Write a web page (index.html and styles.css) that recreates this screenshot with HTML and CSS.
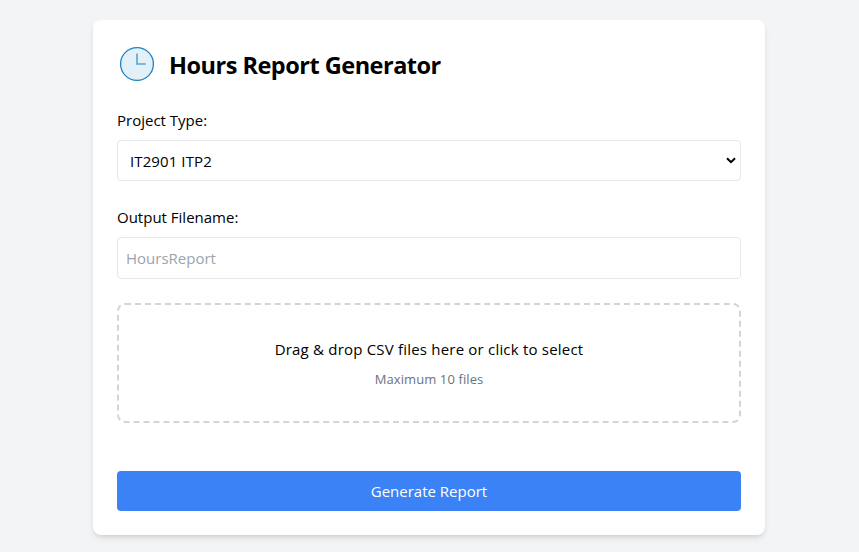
FILE: index.html
```html
<!DOCTYPE html>
<html lang="en">
<head>
<meta charset="utf-8">
<title>Hours Report Generator</title>
<link rel="stylesheet" href="styles.css">
</head>
<body>
<main class="card">
  <header class="header">
    <svg class="logo" viewBox="0 0 40 40" aria-hidden="true">
      <circle cx="20" cy="20" r="16.4" fill="#e3f0f8" stroke="#1c84c6" stroke-width="1.3"/>
      <path d="M20 10v10.4h8.8" transform="translate(0 -.4)" fill="none" stroke="#55a5d5" stroke-width="1.6"/>
    </svg>
    <h1 class="title">Hours Report Generator</h1>
  </header>
  <form class="form">
    <div class="field">
      <label class="label" for="type">Project Type:</label>
      <div class="select-wrap">
        <select class="control select" id="type"><option>IT2901 ITP2</option></select>
        <svg class="chevron" viewBox="0 0 10 7" aria-hidden="true">
          <path d="M1 1.2l4 4 4-4" fill="none" stroke="#000" stroke-width="2"/>
        </svg>
      </div>
    </div>
    <div class="field">
      <label class="label" for="name">Output Filename:</label>
      <input class="control input" id="name" type="text" placeholder="HoursReport">
    </div>
    <div class="dropzone">
      <p class="drop-text">Drag &amp; drop CSV files here or click to select</p>
      <p class="drop-hint">Maximum 10 files</p>
    </div>
    <button class="submit" type="button">Generate Report</button>
  </form>
</main>
</body>
</html>
```

FILE: styles.css
```css
* { box-sizing: border-box; }
body {
  margin: 0;
  min-height: 552px;
  padding-top: 20px;
  background: #f3f4f6;
  color: #000;
  font: 15px/24px "Open Sans", "Noto Sans", sans-serif;
}
.card {
  width: 672px;
  height: 515px;
  margin: 0 auto 0 93px;
  padding: 24px;
  background: #fff;
  border-radius: 8px;
  box-shadow: 0 4px 6px -1px rgba(0,0,0,.1), 0 2px 4px -2px rgba(0,0,0,.1);
}
.header { display: flex; align-items: center; height: 40px; margin-bottom: 24px; gap: 12px; }
.logo { width: 40px; height: 40px; }
.title { margin: 0; padding-top: 2px; font-size: 23.5px; line-height: 32px; font-weight: 700; letter-spacing: -0.5px; }
.form { margin: 0; }
.field { margin-bottom: 24px; }
.label { display: block; margin-bottom: 8px; }
.control {
  display: block;
  width: 100%;
  border: 1px solid #e5e7eb;
  border-radius: 4px;
  background: #fff;
  color: #000;
  font: inherit;
}
.select-wrap { position: relative; }
.select { height: 41px; padding: 7px 12px; appearance: none; letter-spacing: 0.1px; }
.chevron { position: absolute; right: 5px; top: 17px; width: 10px; height: 7px; pointer-events: none; }
.input { height: 42px; padding: 8px; }
.input::placeholder { color: #9ca3af; opacity: 1; }
.dropzone {
  height: 120px;
  padding: 32px 0 0;
  border: 2px dashed #d1d5db;
  border-radius: 8px;
  text-align: center;
}
.drop-text { margin: 0 0 8px; letter-spacing: 0.2px; }
.drop-hint { margin: 0; color: #6b7280; font-size: 13px; line-height: 20px; letter-spacing: 0.1px; }
.submit {
  display: block;
  width: 100%;
  height: 40px;
  margin-top: 48px;
  border: 0;
  border-radius: 4px;
  background: #3b82f6;
  color: #fff;
  font: inherit;
}
```
